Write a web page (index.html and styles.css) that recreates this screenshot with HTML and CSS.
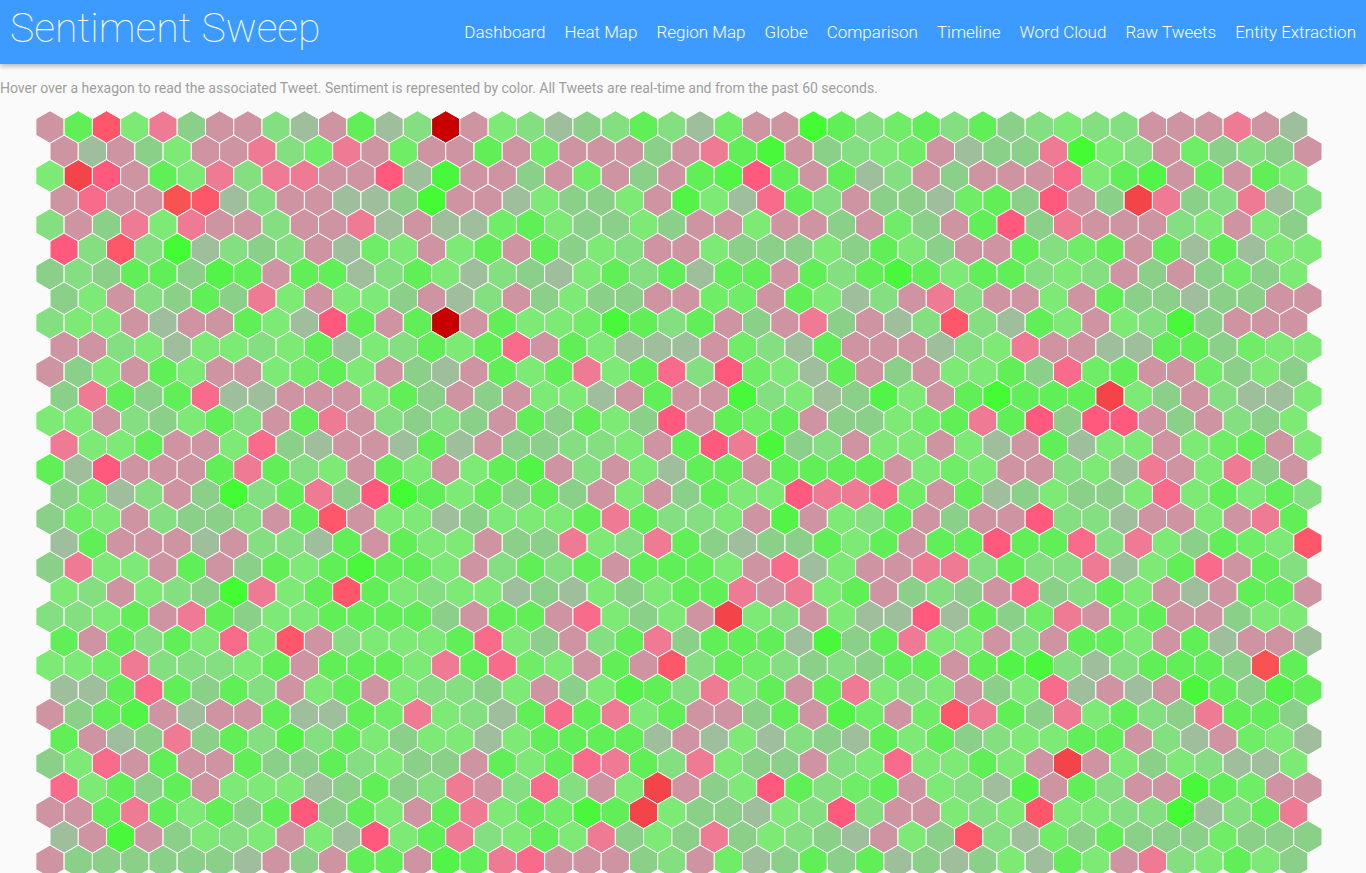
FILE: index.html
```html
<!DOCTYPE html>
<html lang="en">
<head>
<meta charset="utf-8">
<title>Sentiment Sweep</title>
<link rel="stylesheet" href="styles.css">
</head>
<body>
<header class="topbar">
  <h1 class="brand"><a class="brand-link" href="#">Sentiment Sweep</a></h1>
  <nav class="menu">
    <a class="menu-link" href="#">Dashboard</a>
    <a class="menu-link" href="#">Heat Map</a>
    <a class="menu-link" href="#">Region Map</a>
    <a class="menu-link" href="#">Globe</a>
    <a class="menu-link" href="#">Comparison</a>
    <a class="menu-link" href="#">Timeline</a>
    <a class="menu-link" href="#">Word Cloud</a>
    <a class="menu-link" href="#">Raw Tweets</a>
    <a class="menu-link" href="#">Entity Extraction</a>
  </nav>
</header>
<main>
  <p class="hint">Hover over a hexagon to read the associated Tweet. Sentiment is represented by color. All Tweets are real-time and from the past 60 seconds.</p>
  <svg class="hexmap" id="hexmap" viewBox="0 0 1366 763"></svg>
</main>
<script src="hexmap.js"></script>
</body>
</html>
```
FILE: styles.css
```css
body {
  margin: 0;
  background: #fafafa;
  font-family: Roboto, sans-serif;
}

.topbar {
  position: relative;
  display: flex;
  justify-content: space-between;
  align-items: center;
  height: 64px;
  padding: 0 10px;
  background: #3d9aff;
  box-shadow: 0 2px 5px rgba(0, 0, 0, 0.3);
}

.brand {
  margin: 0;
  padding-bottom: 8px;
  font-size: 41px;
  font-weight: 100;
  line-height: 56px;
  white-space: nowrap;
}

.brand-link {
  color: #fff;
  text-decoration: none;
}

.menu {
  display: flex;
  gap: 19px;
  white-space: nowrap;
}

.menu-link {
  color: #fff;
  font-size: 17px;
  font-weight: 300;
  line-height: 64px;
  text-decoration: none;
}

.hint {
  margin: 0;
  padding: 14px 0 12px;
  color: #9e9e9e;
  font-size: 14px;
  line-height: 20px;
}

.hexmap {
  display: block;
  width: 100%;
  stroke: #fff;
  stroke-width: 1;
}
```
FILE: hexmap.js
```js
// Sentiment scale: a-i runs from neutral to positive, p-w to negative.
const COLORS = {
  a: '#9fbf9c', b: '#8bd088', c: '#84df80', d: '#7cea74', e: '#70ed66',
  f: '#61ef58', g: '#52f447', h: '#49f73b', i: '#43fc33',
  p: '#cf94a2', q: '#ef7a94', r: '#f96b8a', s: '#ff5a7d',
  t: '#ff576a', u: '#f85352', v: '#f34549', w: '#c80000'
};

const ROWS = [
  'pftdqbppcapfacw pdcabcfcaeppifc efcfbcdccpppqpa',
  'papbdppqceqpepp fpepppbpqfhpbcd epabbqidcpebcbp',
  'dvspfdqcqqppsah ppbpepbpfgsfpfa cpbppprdfgpfpfd',
  'prpputacppaabip padbbdpgdarfcpb baefbspbvqbcqac',
  'cpbqdqppcppqapa aefdbbdbppdppbp ebpfsbqpppcdpdb',
  'sctciacbcpaedpd fpfbdcppdbbbdbf dbppfcefpfafadd',
  'bcbffbgfpffacfd acbadfcfaffpfcf hfdffcdcpbpbebd',
  'bdpcbfbqdpddbpa cpbdbbppeepfdac pqcppdpfbbabbpp',
  'cddpappfdasfpfw pfddehfcfpbpqbp actcafdpdchbppp',
  'ppcdaddcdfadcfd frpfdaaapecafpp pacdqppaaffbedd',
  'pbdpfdppdefdpba pfdfqdfrcsedafp bpddfbrefppebdb',
  'bqfbfraapppdfbp bpddapfpphcdabg dpfifffvdbpcaad',
  'ddpcbdfcpfqpcbc bpfbfdbspfefpbb defqfsbsspbpcbd',
  'qddfppdrbappafa pbbccdpfsqhbcpd dpdapfaddpdefpd',
  'faspppfqfcdpfdp dfgpcpdaffpffff pdedppcdaqpdqbp',
  'beacpbicfqbsifd fbfbpdpbfddsqqr epfabdbbdrdfdfc',
  'bedpcbbcpftpdda bdddfqfccdpgpdc fpbppsccappdpqf',
  'afpppapccafpfdd pbbqdcqfbabbfdf pffsffrcqdbfedt',
  'bqddpfpbfdfhffd pcfcfpfffdpradp pqqcfccqadfrpfc',
  'dcpdcbiqdftfdcd dabadbdffqpqdfp bcbprbcfdpapffp',
  'ccdfpqfbddffffb pffprdbdpvdcpda asafbeqpefppbdd',
  'fpfcfdrdtpcdddf rdbpcfqbfffahbf qddpcpffdpfappa',
  'ddeqcccdfpfffdq fredpfptcfecbcb ffpfghcacfffbuf',
  'aafrfbfcpdfpdcc bdpbdgfcqdfpfqd cdpbdrapaphfbgf',
  'pbfgpappfaafeqd cafrfqdfppbfpge petqfbqdfcbqffb',
  'fpabqbfcgcfdbdd adffffapadacbaf dfbcddffpcapeda',
  'bdrpfppfbbfcdbb pfdfrqfcqdbbpcd rddfdpvpdbdcaad',
  'rdfbfpdddabfbcq pcrcpdvpbdsfcef pdcagpfcpphfepp',
  'ppfqfdfbfsbfdpf qdfehfvdbbadcsc ppdcdtddcciacfq',
  'aphpbdcdpdasdfq cdfdqbdbqbdcbap dbtcaebfbbbebbb',
  'pbbbbbbapbpffpg fqrpppbcpeabfbf ababdafdpqcdfdb'
];

const RADIUS = 16.32;
const HALF = RADIUS * Math.sqrt(3) / 2;
const LEFT = 50;
const TOP = 17;

const map = document.getElementById('hexmap');
const outline = [
  [0, -RADIUS], [HALF, -RADIUS / 2], [HALF, RADIUS / 2],
  [0, RADIUS], [-HALF, RADIUS / 2], [-HALF, -RADIUS / 2]
];

ROWS.forEach((row, r) => {
  [...row.replace(/ /g, '')].forEach((code, c) => {
    const x = LEFT + c * 2 * HALF + (r % 2) * HALF;
    const y = TOP + r * RADIUS * 1.5;
    const hex = document.createElementNS('http://www.w3.org/2000/svg', 'polygon');
    hex.setAttribute('points', outline.map(([dx, dy]) => `${x + dx},${y + dy}`).join(' '));
    hex.setAttribute('fill', COLORS[code]);
    map.appendChild(hex);
  });
});
```
